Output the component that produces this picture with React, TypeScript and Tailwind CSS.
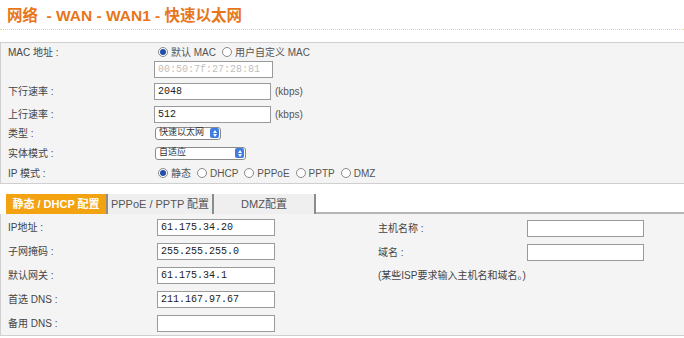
import React from 'react';

const font = '"Liberation Sans", "Noto Sans CJK SC", sans-serif';
const mono = '"Liberation Mono", "Noto Sans CJK SC", monospace';

const Radio = ({ checked, label }: { checked?: boolean; label: string }) => (
  <span className="flex items-center gap-[3px] mr-[6px]">
    <span className="w-[10px] h-[10px] rounded-full border border-[#8a8a8a] bg-white flex items-center justify-center">
      {checked && <span className="w-[6px] h-[6px] rounded-full bg-[#1f4fa8]" />}
    </span>
    <span>{label}</span>
  </span>
);

const TextBox = ({ value, w, disabled }: { value: string; w: string; disabled?: boolean }) => (
  <div
    className={`${w} h-[17px] border border-[#9a9a9a] bg-white flex items-center px-[3px] text-[10px] ${
      disabled ? 'text-[#c0c0c0]' : 'text-[#222]'
    }`}
    style={{ fontFamily: mono }}
  >
    {value}
  </div>
);

const Select = ({ value, w }: { value: string; w: string }) => (
  <div className={`${w} h-[13px] border border-[#8a8a8a] rounded-[3px] bg-white flex items-center justify-between pl-[3px] text-[9px] text-[#333]`}>
    <span>{value}</span>
    <span className="w-[9px] h-[10px] mr-[1px] rounded-[2px] bg-[#3f7ee0] flex flex-col items-center justify-center gap-[1px]">
      <span className="w-0 h-0 border-l-[2px] border-r-[2px] border-b-[3px] border-l-transparent border-r-transparent border-b-white" />
      <span className="w-0 h-0 border-l-[2px] border-r-[2px] border-t-[3px] border-l-transparent border-r-transparent border-t-white" />
    </span>
  </div>
);

const Row = ({ label, h, children }: { label: string; h: string; children?: React.ReactNode }) => (
  <div className={`flex items-center ${h}`}>
    <div className="w-[153px] pl-[7px] text-[#444]">{label}</div>
    <div className="flex items-center">{children}</div>
  </div>
);

export default function App() {
  return (
    <div className="w-[684px] h-[338px] bg-white overflow-hidden text-[10px] text-[#555]" style={{ fontFamily: font }}>
      {/* Title */}
      <div className="h-[29px] pl-[7px] pt-[7px] text-[15.5px] font-bold text-[#e8761a] leading-[18px]">
        网络&nbsp;&nbsp;- WAN - WAN1 - 快速以太网
      </div>
      <div className="h-[1px] border-t border-dotted border-[#ecd58a]" />
      <div className="h-[12px]" />

      {/* Top panel */}
      <div className="bg-[#f4f4f4] border-t border-b border-l border-[#cfcfcf]">
        <Row label="MAC 地址 :" h="h-[18px]">
          <div className="flex items-center pl-[4px] text-[#555]">
            <Radio checked label="默认 MAC" />
            <Radio label="用户自定义 MAC" />
          </div>
        </Row>
        <Row label="" h="h-[16px]">
          <TextBox value="00:50:7f:27:28:81" w="w-[119px] h-[15px]" disabled />
        </Row>
        <Row label="下行速率 :" h="h-[28px]">
          <TextBox value="2048" w="w-[117px]" />
          <span className="ml-[4px]">(kbps)</span>
        </Row>
        <Row label="上行速率 :" h="h-[18px]">
          <TextBox value="512" w="w-[117px]" />
          <span className="ml-[4px]">(kbps)</span>
        </Row>
        <Row label="类型 :" h="h-[20px]">
          <div className="pl-[1px]">
            <Select value="快速以太网" w="w-[66px]" />
          </div>
        </Row>
        <Row label="实体模式 :" h="h-[20px]">
          <div className="pl-[1px]">
            <Select value="自适应" w="w-[91px]" />
          </div>
        </Row>
        <Row label="IP 模式 :" h="h-[20px]">
          <div className="flex items-center pl-[4px]">
            <Radio checked label="静态" />
            <Radio label="DHCP" />
            <Radio label="PPPoE" />
            <Radio label="PPTP" />
            <Radio label="DMZ" />
          </div>
        </Row>
      </div>

      <div className="h-[10px]" />

      {/* Tabs */}
      <div className="flex items-end h-[20px]">
        <div className="w-[6px] h-full" />
        <div className="w-[100px] h-full bg-[#f2a30f] text-white font-bold text-[11px] flex items-center justify-center">
          静态 / DHCP 配置
        </div>
        <div className="w-[106px] h-full bg-[#efefef] border-l-2 border-[#8c8c8c] text-[#555] text-[11px] flex items-center justify-center">
          PPPoE / PPTP 配置
        </div>
        <div className="w-[104px] h-full bg-[#efefef] border-l-2 border-r-2 border-[#8c8c8c] text-[#555] text-[11px] flex items-center justify-center">
          DMZ配置
        </div>
        <div className="flex-1 h-full border-b-2 border-[#b5b5b5]" />
      </div>

      {/* Bottom panel */}
      <div className="h-[122px] bg-[#f4f4f4] border-l border-b border-[#cfcfcf] flex pt-[1px]">
        <div className="w-[371px]">
          {[
            ['IP地址 :', '61.175.34.20'],
            ['子网掩码 :', '255.255.255.0'],
            ['默认网关 :', '61.175.34.1'],
            ['首选 DNS :', '211.167.97.67'],
            ['备用 DNS :', ''],
          ].map(([l, v]) => (
            <div key={l} className="flex items-center h-[24px]">
              <div className="w-[156px] pl-[7px] text-[#444]">{l}</div>
              <TextBox value={v} w="w-[118px]" />
            </div>
          ))}
        </div>
        <div className="flex-1">
          <div className="flex items-center h-[25px] pt-[2px]">
            <div className="w-[155px] pl-[6px] text-[#444]">主机名称 :</div>
            <TextBox value="" w="w-[117px]" />
          </div>
          <div className="flex items-center h-[24px]">
            <div className="w-[155px] pl-[6px] text-[#444]">域名 :</div>
            <TextBox value="" w="w-[117px]" />
          </div>
          <div className="h-[22px] flex items-center pl-[6px] text-[#444]">(某些ISP要求输入主机名和域名。)</div>
        </div>
      </div>
    </div>
  );
}
